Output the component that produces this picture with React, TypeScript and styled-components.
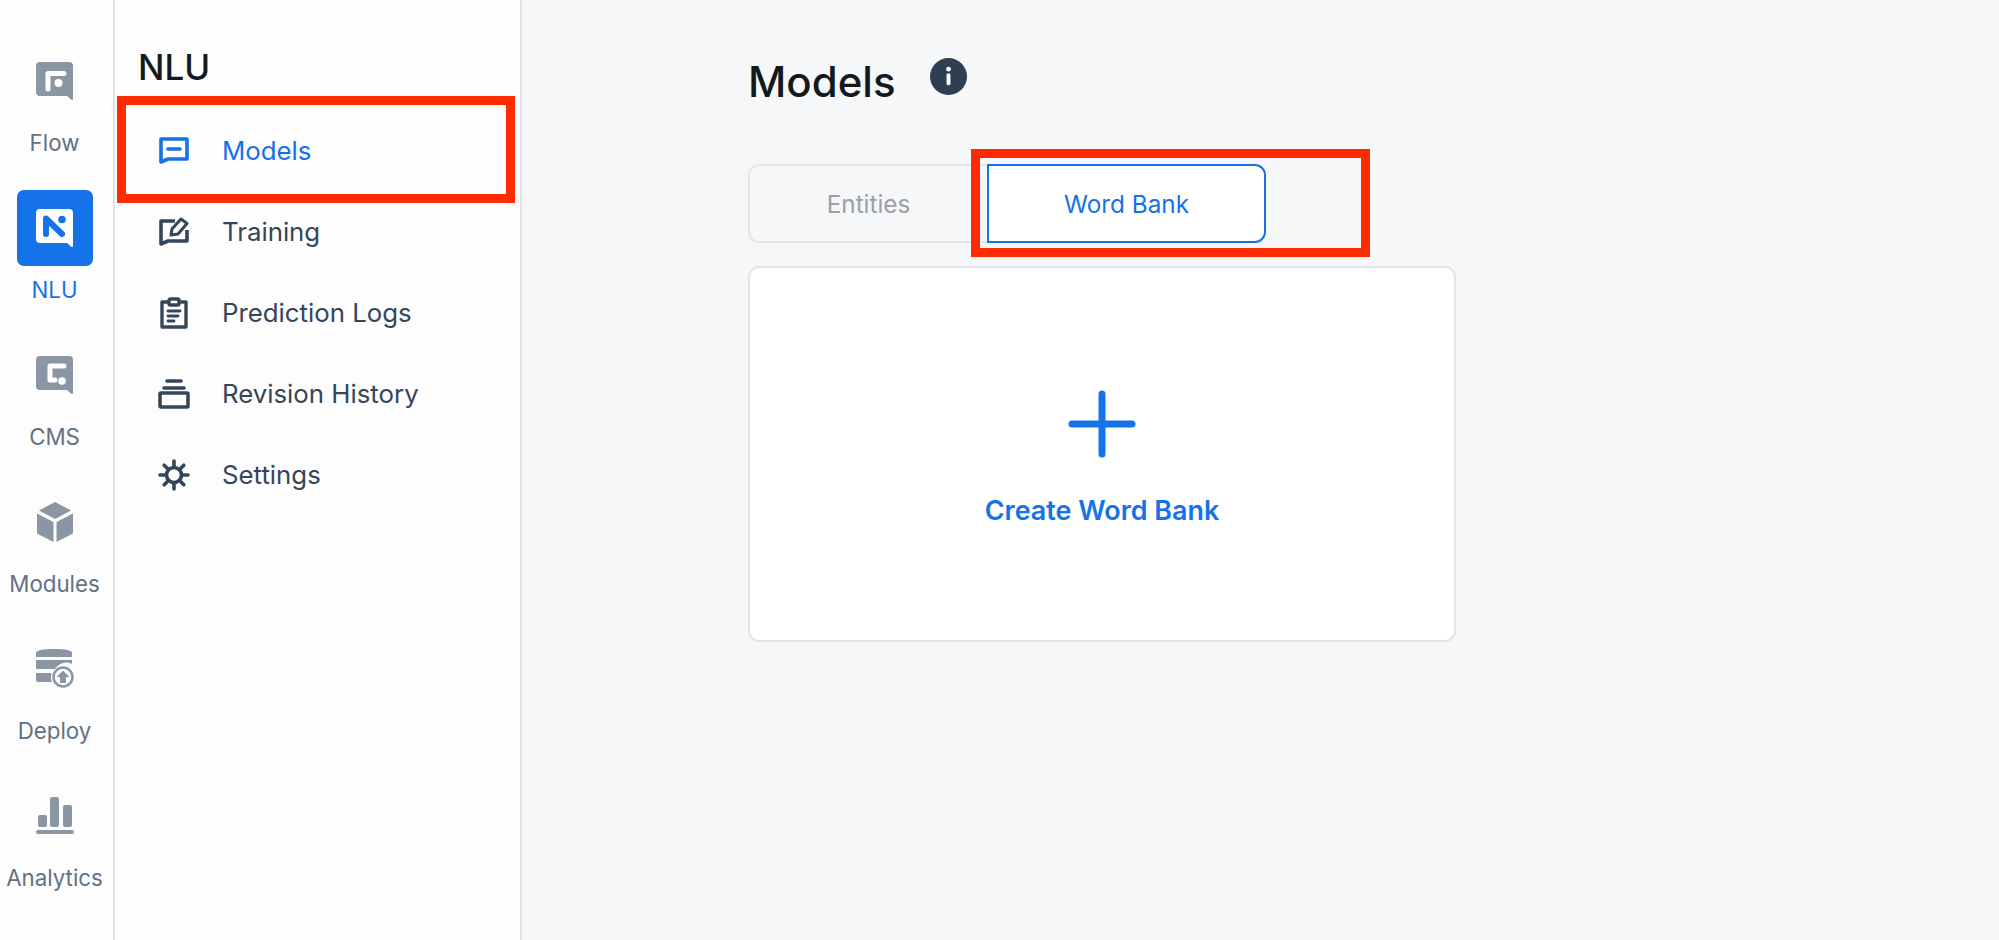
import styled, { createGlobalStyle } from "styled-components";
import type { ReactNode } from "react";

const GlobalStyle = createGlobalStyle`
  html, body {
    margin: 0;
    padding: 0;
    height: 100%;
    background: #f6f7f9;
    font-family: Inter, "Liberation Sans", sans-serif;
  }
  #root {
    height: 100%;
  }
`;

const Page = styled.div`
  display: flex;
  height: 940px;
  overflow: hidden;
`;

const Rail = styled.nav`
  width: 110px;
  flex: none;
  padding: 43px 3px 0 0;
  background: #fdfdfe;
  border-right: 2px solid #dfe3e8;
  display: flex;
  flex-direction: column;
  align-items: center;
`;

const RailItem = styled.div`
  height: 147px;
  display: flex;
  flex-direction: column;
  align-items: center;
`;

const RailTile = styled.div<{ $active?: boolean }>`
  width: 76px;
  height: 76px;
  border-radius: 7px;
  display: flex;
  align-items: center;
  justify-content: center;
  background: ${(p) => (p.$active ? "#1572e8" : "transparent")};
`;

const RailLabel = styled.div<{ $active?: boolean }>`
  margin: 10px 1px 0 0;
  font-size: 22.3px;
  line-height: 28px;
  white-space: nowrap;
  color: ${(p) => (p.$active ? "#1572e8" : "#627183")};
`;

const Panel = styled.aside`
  width: 405px;
  flex: none;
  padding-top: 47px;
  background: #fdfdfe;
  border-right: 2px solid #dfe3e8;
`;

const PanelTitle = styled.h2`
  margin: 0 0 23px 23px;
  font-size: 35px;
  line-height: 40px;
  font-weight: 500;
  color: #141a1c;
`;

const NavRow = styled.div<{ $active?: boolean }>`
  position: relative;
  height: 81px;
  display: flex;
  align-items: center;
  gap: 32px;
  padding-left: 43px;
  font-size: 25.8px;
  color: ${(p) => (p.$active ? "#1572e8" : "#35465a")};
`;

const NavGlyph = styled.svg`
  width: 32px;
  height: 32px;
  flex: none;
`;

const NavBox = styled.div`
  position: absolute;
  left: 2px;
  top: -14px;
  width: 398px;
  height: 107px;
  box-sizing: border-box;
  border: 9px solid #ff2a00;
  pointer-events: none;
`;

const Main = styled.main`
  flex: 1;
  padding: 56px 0 0 226px;
  background: #f6f7f9;
`;

const Column = styled.div`
  width: 708px;
`;

const TitleRow = styled.div`
  display: flex;
  gap: 34px;
  align-items: flex-start;
`;

const Title = styled.h1`
  margin: 0;
  font-size: 42px;
  line-height: 52px;
  font-weight: 500;
  color: #141a1c;
`;

const InfoBadge = styled.svg`
  width: 37px;
  height: 37px;
  margin-top: 2px;
  flex: none;
`;

const Tabs = styled.div`
  position: relative;
  display: flex;
  margin-top: 56px;
  height: 79px;
`;

const EntitiesTab = styled.div`
  width: 239px;
  box-sizing: border-box;
  display: flex;
  align-items: center;
  justify-content: center;
  font-size: 24.3px;
  color: #9aa0a5;
  border: 2px solid #e4e6ea;
  border-right: none;
  border-radius: 11px 0 0 11px;
`;

const WordBankTab = styled.div`
  width: 279px;
  box-sizing: border-box;
  display: flex;
  align-items: center;
  justify-content: center;
  font-size: 24.3px;
  color: #1572e8;
  background: #fff;
  border: 2px solid #1572e8;
  border-radius: 0 11px 11px 0;
`;

const TabBox = styled.div`
  position: absolute;
  left: 223px;
  top: -15px;
  width: 399px;
  height: 108px;
  box-sizing: border-box;
  border: 9px solid #ff2a00;
  pointer-events: none;
`;

const CreateCard = styled.div`
  margin-top: 23px;
  height: 376px;
  box-sizing: border-box;
  background: #fff;
  border: 2px solid #e1e4e8;
  border-radius: 11px;
  display: flex;
  flex-direction: column;
  align-items: center;
  padding-top: 122px;
  color: #1572e8;
`;

const PlusGlyph = styled.svg`
  width: 68px;
  height: 68px;
`;

const CreateLabel = styled.div`
  margin-top: 36px;
  font-size: 26.9px;
  line-height: 32px;
  font-weight: 600;
`;

// filled bubble with a little tail, the white marks go on top
const bubble = "M4 0H33a4 4 0 0 1 4 4V37a1 1 0 0 1-1.7.7L31 34H4a4 4 0 0 1-4-4V4a4 4 0 0 1 4-4Z";

function RailSvg({ children, w = 38, h = 38 }: { children: ReactNode; w?: number; h?: number }) {
  return (
    <svg width={w} height={h} viewBox={`0 0 ${w} ${h}`} fill="#8a96a3">
      {children}
    </svg>
  );
}

const FlowIcon = () => (
  <RailSvg>
    <path d={bubble} />
    <path d="M12 27V11.5H28" fill="none" stroke="#fff" strokeWidth="5" strokeLinecap="round" strokeLinejoin="round" />
    <circle cx="22.5" cy="21" r="4" fill="#fff" />
  </RailSvg>
);

const NluIcon = () => (
  <RailSvg>
    <path d={bubble} fill="#fff" />
    <path d="M10 25V9.5L26 25" fill="none" stroke="#1572e8" strokeWidth="6" strokeLinecap="round" strokeLinejoin="round" />
    <circle cx="26" cy="10.5" r="3.8" fill="#1572e8" />
  </RailSvg>
);

const CmsIcon = () => (
  <RailSvg>
    <path d={bubble} />
    <path d="M28 10H14V24H19" fill="none" stroke="#fff" strokeWidth="5" strokeLinecap="round" strokeLinejoin="round" />
    <circle cx="26" cy="25" r="3.8" fill="#fff" />
  </RailSvg>
);

const ModulesIcon = () => (
  <RailSvg w={36} h={40}>
    <path d="M18 0L34 8.5L18 17L2 8.5Z" />
    <path d="M0 11.5L16.5 20V40L1 32A2 2 0 0 1 0 30Z" />
    <path d="M36 11.5L19.5 20V40L35 32A2 2 0 0 0 36 30Z" />
  </RailSvg>
);

const DeployIcon = () => (
  <RailSvg h={40}>
    <path d="M0 4C0 1.5 6 0 18 0S36 1.5 36 4V8H0Z" />
    <path d="M0 11H36V15A13 13 0 0 0 19 20H0Z" />
    <path d="M0 24H15.5A13 13 0 0 0 16 33H2A2 2 0 0 1 0 31Z" />
    <circle cx="27" cy="28" r="9.5" fill="none" stroke="#8a96a3" strokeWidth="2.5" />
    <path d="M27 21.5L33.5 28H30V34H24V28H20.5Z" />
  </RailSvg>
);

const AnalyticsIcon = () => (
  <RailSvg h={38}>
    <rect x="2" y="18" width="9" height="12" rx="2" />
    <rect x="14" y="0" width="9" height="30" rx="2" />
    <rect x="27" y="8" width="9" height="22" rx="2" />
    <rect x="0" y="33" width="38" height="4" rx="2" />
  </RailSvg>
);

const ModelsGlyph = () => (
  <NavGlyph viewBox="0 0 32 32" fill="none" stroke="currentColor" strokeWidth="3.6" strokeLinejoin="round">
    <path d="M3 4H29V24H10L3 27Z" />
    <path d="M10 14H22" strokeLinecap="round" />
  </NavGlyph>
);

const TrainingGlyph = () => (
  <NavGlyph viewBox="0 0 32 32" fill="none" stroke="currentColor" strokeWidth="3.6" strokeLinejoin="round">
    <path d="M17 5H3V28L10 25H29V14" />
    <path d="M13 19L14 13L23 3L29 7.5L20 18Z" strokeWidth="3" />
  </NavGlyph>
);

const LogsGlyph = () => (
  <NavGlyph viewBox="0 0 32 32" fill="none" stroke="currentColor" strokeWidth="3.4" strokeLinejoin="round">
    <path d="M11 5H4V30H28V5H21" />
    <rect x="11" y="2" width="10" height="6" rx="1.5" />
    <path d="M10 14H22M10 19H20M10 24H16" strokeLinecap="round" strokeWidth="2.8" />
  </NavGlyph>
);

const RevisionGlyph = () => (
  <NavGlyph viewBox="0 0 32 32" fill="none" stroke="currentColor" strokeWidth="3.6" strokeLinejoin="round">
    <path d="M9 3H23" strokeLinecap="round" />
    <path d="M6 10H26" strokeLinecap="round" />
    <rect x="2" y="15" width="28" height="14" rx="1" />
  </NavGlyph>
);

const SettingsGlyph = () => (
  <NavGlyph viewBox="0 0 32 32" fill="none" stroke="currentColor" strokeWidth="3.6" strokeLinecap="round">
    <circle cx="16" cy="16" r="7.5" />
    <path d="M16 2V8M16 24V30M2 16H8M24 16H30M6.2 6.2L10.5 10.5M21.5 21.5L25.8 25.8M25.8 6.2L21.5 10.5M10.5 21.5L6.2 25.8" />
  </NavGlyph>
);

const railItems = [
  { label: "Flow", icon: <FlowIcon /> },
  { label: "NLU", icon: <NluIcon />, active: true },
  { label: "CMS", icon: <CmsIcon /> },
  { label: "Modules", icon: <ModulesIcon /> },
  { label: "Deploy", icon: <DeployIcon /> },
  { label: "Analytics", icon: <AnalyticsIcon /> },
];

const navItems = [
  { label: "Models", icon: <ModelsGlyph />, active: true },
  { label: "Training", icon: <TrainingGlyph /> },
  { label: "Prediction Logs", icon: <LogsGlyph /> },
  { label: "Revision History", icon: <RevisionGlyph /> },
  { label: "Settings", icon: <SettingsGlyph /> },
];

export default function App() {
  return (
    <Page>
      <GlobalStyle />
      <Rail>
        {railItems.map((item) => (
          <RailItem key={item.label}>
            <RailTile $active={item.active}>{item.icon}</RailTile>
            <RailLabel $active={item.active}>{item.label}</RailLabel>
          </RailItem>
        ))}
      </Rail>

      <Panel>
        <PanelTitle>NLU</PanelTitle>
        {navItems.map((item) => (
          <NavRow key={item.label} $active={item.active}>
            {item.icon}
            {item.label}
            {item.active && <NavBox />}
          </NavRow>
        ))}
      </Panel>

      <Main>
        <Column>
          <TitleRow>
            <Title>Models</Title>
            <InfoBadge viewBox="0 0 38 38">
              <circle cx="19" cy="19" r="19" fill="#2f3f52" />
              <circle cx="19" cy="11.5" r="2.4" fill="#fff" />
              <rect x="17" y="16" width="4" height="12" rx="1.5" fill="#fff" />
            </InfoBadge>
          </TitleRow>

          <Tabs>
            <EntitiesTab>Entities</EntitiesTab>
            <WordBankTab>Word Bank</WordBankTab>
            <TabBox />
          </Tabs>

          <CreateCard>
            <PlusGlyph viewBox="0 0 68 68" fill="none" stroke="currentColor" strokeWidth="7" strokeLinecap="round">
              <path d="M34 4V64M4 34H64" />
            </PlusGlyph>
            <CreateLabel>Create Word Bank</CreateLabel>
          </CreateCard>
        </Column>
      </Main>
    </Page>
  );
}
